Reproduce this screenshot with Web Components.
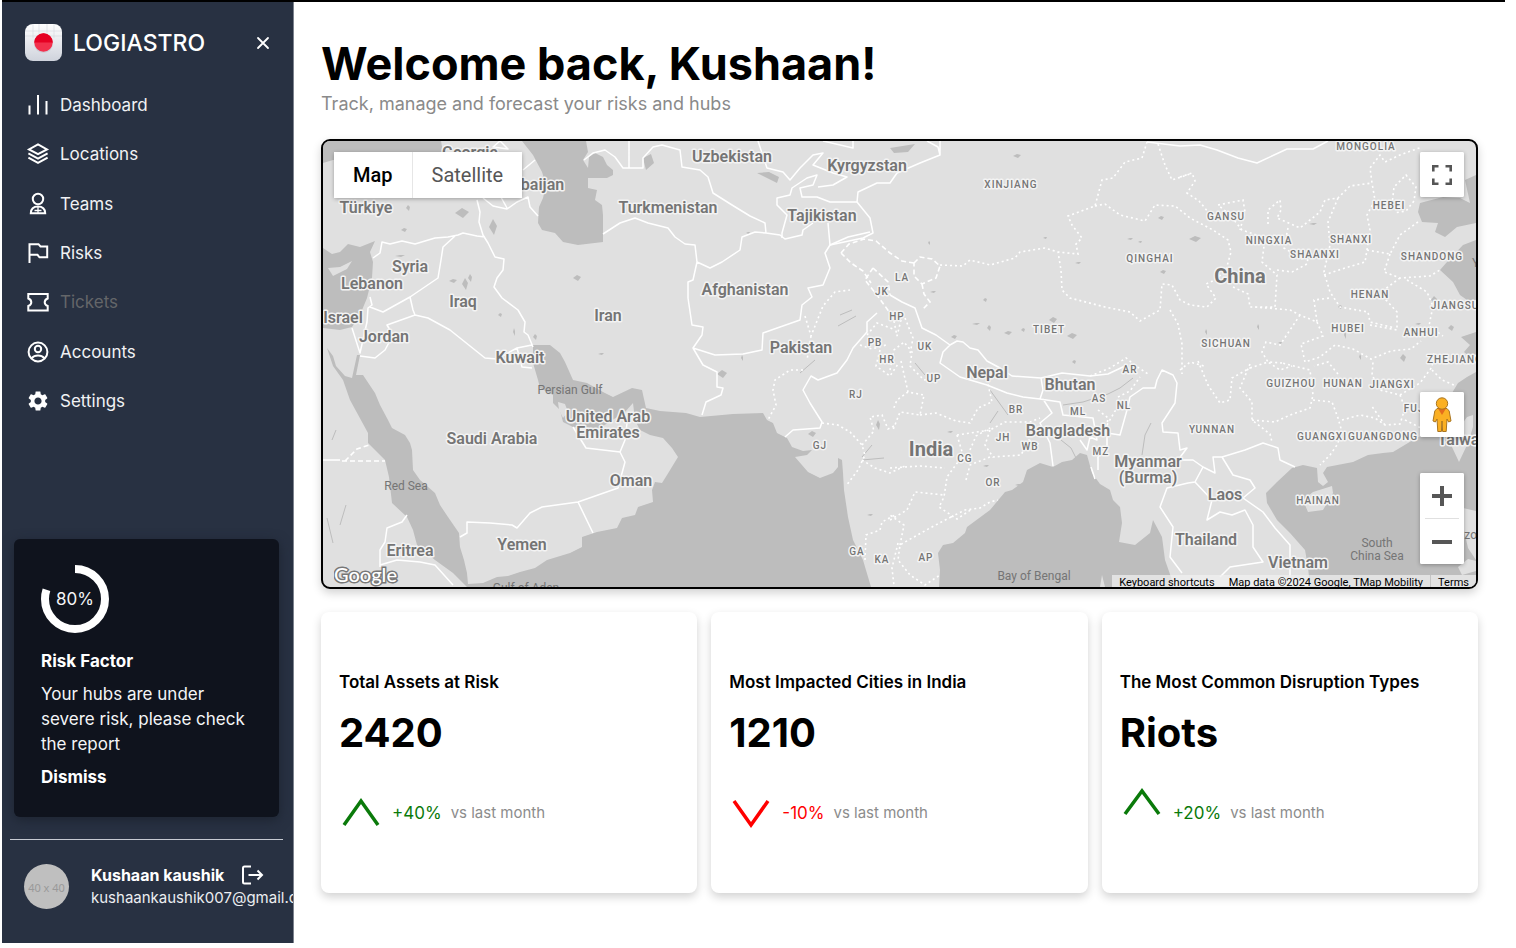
<!DOCTYPE html>
<html lang="en">
<head>
<meta charset="utf-8">
<meta name="viewport" content="width=device-width, initial-scale=1">
<title>Logiastro – Dashboard</title>
<style>
  body { margin: 0; background: #fff; color: #000; font-family: Inter, "Liberation Sans", sans-serif; }
</style>
</head>
<body>
<app-shell>
  <side-bar slot="side">
    <nav-item icon="chart">Dashboard</nav-item>
    <nav-item icon="layers">Locations</nav-item>
    <nav-item icon="team">Teams</nav-item>
    <nav-item icon="flag">Risks</nav-item>
    <nav-item icon="ticket" muted>Tickets</nav-item>
    <nav-item icon="account">Accounts</nav-item>
    <nav-item icon="gear">Settings</nav-item>
    <risk-card slot="card" value="80"></risk-card>
    <user-panel slot="user" name="Kushaan kaushik" email="kushaankaushik007@gmail.com"></user-panel>
  </side-bar>
  <page-heading>
    <span slot="title">Welcome back, Kushaan!</span>
    Track, manage and forecast your risks and hubs
  </page-heading>
  <region-map></region-map>
  <stat-row>
    <stat-card trend="up" change="+40%" value="2420">Total Assets at Risk</stat-card>
    <stat-card trend="down" change="-10%" value="1210">Most Impacted Cities in India</stat-card>
    <stat-card trend="rise" change="+20%" value="Riots">The Most Common Disruption Types</stat-card>
  </stat-row>
</app-shell>

<script>
function define(name, html, setup) {
  const template = document.createElement('template');
  template.innerHTML = html;
  customElements.define(name, class extends HTMLElement {
    constructor() {
      super();
      this.attachShadow({ mode: 'open' }).append(template.content.cloneNode(true));
    }
    connectedCallback() {
      if (setup) setup(this, this.shadowRoot);
    }
  });
}

define('app-shell', `
<style>
  :host { display: flex; box-sizing: border-box; min-height: calc(100vh - 5px); margin: 0 11px 5px 2px; border-top: 2px solid #000; }
  main { flex: 1; min-width: 0; padding: 37px 27px 48px; }
</style>
<slot name="side"></slot>
<main><slot></slot></main>`);

define('side-bar', `
<style>
  :host { display: flex; flex-direction: column; flex: none; box-sizing: border-box; width: 292px; overflow: hidden; background: #283142; border-right: 1px solid #7c828d; color: #fff; }
  header { display: flex; align-items: center; padding: 22px 22px 0 23px; }
  header svg { flex: none; }
  strong { flex: 1; margin-left: 11px; font-size: 23px; line-height: 36px; font-weight: 500; }
  button { display: flex; width: 16px; height: 16px; padding: 0; border: 0; background: none; color: inherit; }
  nav { display: grid; grid-auto-rows: 1fr; height: 346px; margin-top: 19px; }
  .card { margin: auto 14px 0 12px; }
  .user { margin: 22px 0 0 8px; }
</style>
<header>
  <svg width="37" height="37" viewBox="0 0 37 37" aria-hidden="true">
    <defs>
      <linearGradient id="tile" x1="0" y1="0" x2="0" y2="1"><stop offset="0" stop-color="#fff"/><stop offset="1" stop-color="#cfd3dc"/></linearGradient>
    </defs>
    <rect width="37" height="37" rx="8" fill="url(#tile)"/>
    <path d="M0 7h37M0 12h37M8 0v14M14 0v12M22 0v12M29 0v14" stroke="#d3d6dd" stroke-width=".6"/>
    <circle cx="18.5" cy="19.500" r="9.500" fill="#aab" opacity=".3"/>
    <circle cx="18.500" cy="18.500" r="9.200" fill="#f2304c"/>
    <path d="M9.300 18.500a9.200 9.200 0 0 1 18.400 0z" fill="#e60023"/>
  </svg>
  <strong>LOGIASTRO</strong>
  <button aria-label="Close menu"><svg width="16" height="16" viewBox="0 0 16 16"><path d="M3 3l10 10M13 3L3 13" stroke="currentColor" stroke-width="1.800" stroke-linecap="round"/></svg></button>
</header>
<nav aria-label="Main"><slot></slot></nav>
<div class="card"><slot name="card"></slot></div>
<div class="user"><slot name="user"></slot></div>`);

const ICONS = {
  chart: '<path d="M3.500 12.500v9M12 2v19.500M20.500 8v13.500"/>',
  layers: '<path d="M12 2.400l9 5-9 4.800-9-4.800zM2.400 11.400l9.600 5.200 9.600-5.200M2.400 15.600l9.600 5.300 9.600-5.300"/>',
  team: '<circle cx="12" cy="7" r="5.200"/><path d="M4.800 21.200c.2-4.800 3-6.600 7.200-6.600s7 1.800 7.200 6.600z"/><path stroke-width="1.300" d="M12 14.500v7M8.500 18.500h7"/>',
  flag: '<path d="M3.500 22V3.200h9l2 2.300h6.700v10.800h-7.700l-2-2.500h-8"/>',
  ticket: '<path d="M2.300 4h19.400v4.500c-4 1.500-4 6 0 7.500v4.500H2.300V16c4-1.500 4-6 0-7.500z"/>',
  account: '<circle cx="12" cy="12" r="9.400"/><circle cx="12" cy="9" r="3.200"/><path d="M5.500 18.200c3.300-3.600 9.700-3.600 13 0"/>',
  gear: '<path stroke="none" fill="currentColor" d="M19.140 12.940c.04-.3.06-.61.06-.94 0-.32-.02-.64-.07-.94l2.030-1.580c.18-.14.23-.41.12-.61l-1.920-3.320c-.12-.22-.37-.29-.59-.22l-2.390.96c-.5-.38-1.030-.7-1.620-.94l-.36-2.540c-.04-.24-.24-.41-.48-.41h-3.840c-.24 0-.43.17-.47.41l-.36 2.540c-.59.24-1.130.57-1.620.94l-2.390-.96c-.22-.08-.47 0-.59.22L2.740 8.870c-.12.21-.08.47.12.61l2.030 1.580c-.05.3-.09.63-.09.94s.02.64.07.94l-2.030 1.580c-.18.14-.23.41-.12.61l1.920 3.320c.12.22.37.29.59.22l2.390-.96c.5.38 1.030.7 1.620.94l.36 2.540c.05.24.24.41.48.41h3.840c.24 0 .44-.17.47-.41l.36-2.540c.59-.24 1.130-.56 1.620-.94l2.390.96c.22.08.47 0 .59-.22l1.920-3.320c.12-.22.07-.47-.12-.61zM12 15.600c-1.980 0-3.600-1.620-3.600-3.600s1.620-3.600 3.600-3.600 3.600 1.620 3.600 3.600-1.620 3.600-3.600 3.600z"/>'
};

define('nav-item', `
<style>
  :host { display: flex; }
  a { display: flex; flex: 1; align-items: center; gap: 10px; padding-left: 24px; color: #f1f2f4; font-size: 17px; line-height: 24px; text-decoration: none; }
  svg { flex: none; color: #fff; }
  :host([muted]) a { color: #646669; }
</style>
<a href="#"><svg width="24" height="24" viewBox="0 0 24 24" fill="none" stroke="currentColor" stroke-width="2" aria-hidden="true"></svg><span><slot></slot></span></a>`,
(el, root) => { root.querySelector('svg').innerHTML = ICONS[el.getAttribute('icon')]; });

define('risk-card', `
<style>
  :host { display: block; box-sizing: border-box; padding: 26px 27px 28px; border-radius: 6px; background: #0f131d; box-shadow: 0 3px 12px #1d2431; color: #f4f5f7; font-size: 17px; line-height: 24px; }
  .ring { display: grid; width: 68px; height: 68px; place-items: center; }
  .ring > * { grid-area: 1 / 1; }
  h2 { margin: 16px 0 9px; font-size: 17px; font-weight: 700; color: #fff; }
  p { margin: 0 0 8px; line-height: 25px; }
  button { display: block; padding: 0; border: 0; background: none; color: #fff; font: inherit; font-weight: 700; }
</style>
<div class="ring">
  <svg width="68" height="68" viewBox="0 0 68 68" fill="none" aria-hidden="true"><circle cx="34" cy="34" r="30" pathLength="100" stroke="#fff" stroke-width="8" transform="rotate(-90 34 34)"/></svg>
  <span></span>
</div>
<h2>Risk Factor</h2>
<p>Your hubs are under severe risk, please check the report</p>
<button>Dismiss</button>`,
(el, root) => {
  const value = el.getAttribute('value');
  root.querySelector('circle').setAttribute('stroke-dasharray', value + ' 100');
  root.querySelector('span').textContent = value + '%';
});

define('user-panel', `
<style>
  :host { display: flex; align-items: center; padding: 24px 0 34px 14px; white-space: nowrap; position: relative; }
  hr { position: absolute; top: 0; left: 0; width: 273px; height: 1px; margin: 0; border: 0; background: #c6cad2; }
  .avatar { flex: none; width: 45px; height: 45px; border-radius: 50%; background: #bfbfbf; color: #999; font-family: "Noto Sans", sans-serif; font-size: 11px; line-height: 47px; text-align: center; }
  .who { margin-left: 22px; }
  .top { display: flex; align-items: center; gap: 16px; height: 24px; }
  b { font-size: 16px; line-height: 24px; font-weight: 700; color: #fff; }
  .mail { font-size: 15px; line-height: 22px; color: #eceef1; }
  button { display: flex; padding: 0; border: 0; background: none; color: #fff; }
</style>
<hr>
<div class="avatar">40 x 40</div>
<div class="who">
  <div class="top"><b></b><button aria-label="Log out"><svg width="24" height="24" viewBox="0 0 24 24" fill="none" stroke="currentColor" stroke-width="2"><path d="M11 3.500H4.500a1.500 1.500 0 0 0-1.500 1.500v14a1.500 1.500 0 0 0 1.500 1.500H11M8.500 12h13M17.500 7.500L22 12l-4.500 4.500"/></svg></button></div>
  <div class="mail"></div>
</div>`,
(el, root) => {
  root.querySelector('b').textContent = el.getAttribute('name');
  root.querySelector('.mail').textContent = el.getAttribute('email');
});

define('page-heading', `
<style>
  :host { display: block; }
  h1 { margin: 0; font-size: 45px; line-height: 50px; font-weight: 700; }
  p { margin: 3px 0 23px; font-size: 18px; line-height: 24px; color: #8a8a8a; }
</style>
<h1><slot name="title"></slot></h1>
<p><slot></slot></p>`);

define('stat-row', `
<style>
  :host { display: grid; grid-template-columns: repeat(3, minmax(0, 1fr)); gap: 14px; margin-top: 23px; }
</style>
<slot></slot>`);

const ARROWS = {
  up: ['#0a7a0a', 'M5 32L22 8l17 24'],
  down: ['#f00', 'M5 8l17 24L39 8'],
  rise: ['#0a7a0a', 'M5 21L22 -2l17 23']
};

define('stat-card', `
<style>
  :host { display: flex; flex-direction: column; justify-content: center; box-sizing: border-box; min-height: 281px; padding: 18px 18px 20px; border-radius: 8px; background: #fff; box-shadow: 0 4px 10px #0000002e; }
  h2 { margin: 0; font-size: 17px; line-height: 24px; font-weight: 600; }
  strong { margin: 14px 0 35px; font-size: 40px; line-height: 50px; font-weight: 700; }
  .row { display: flex; align-items: center; height: 40px; }
  svg { flex: none; overflow: visible; }
  .change { margin: 0 9px; font-size: 17px; line-height: 24px; }
  .note { font-size: 15px; line-height: 24px; color: #8c8c8c; }
</style>
<h2><slot></slot></h2>
<strong></strong>
<div class="row"><svg width="44" height="40" viewBox="0 0 44 40" fill="none" stroke-width="3.500" aria-hidden="true"><path/></svg><span class="change"></span><span class="note">vs last month</span></div>`,
(el, root) => {
  const [color, d] = ARROWS[el.getAttribute('trend')];
  root.querySelector('strong').textContent = el.getAttribute('value');
  const change = root.querySelector('.change');
  change.textContent = el.getAttribute('change');
  change.style.color = color;
  const path = root.querySelector('path');
  path.setAttribute('d', d);
  path.setAttribute('stroke', color);
});

/* Map labels: [class, centre x, baseline y, text] */
const LABELS = [
  ['c', 470, 158, 'Georgia'], ['c', 526, 190, 'Azerbaijan'], ['c', 366, 213, 'Türkiye'], ['c', 410, 272, 'Syria'], ['c', 372, 289, 'Lebanon'],
  ['c', 463, 307, 'Iraq'], ['c', 343, 323, 'Israel'], ['c', 384, 342, 'Jordan'], ['c', 520, 363, 'Kuwait'], ['c', 608, 321, 'Iran'],
  ['c', 668, 213, 'Turkmenistan'], ['c', 732, 162, 'Uzbekistan'], ['c', 867, 171, 'Kyrgyzstan'], ['c', 822, 221, 'Tajikistan'],
  ['c', 745, 295, 'Afghanistan'], ['c', 801, 353, 'Pakistan'], ['c', 987, 378, 'Nepal'], ['c', 1070, 390, 'Bhutan'],
  ['c', 1068, 436, 'Bangladesh'], ['c', 1148, 467, 'Myanmar'], ['c', 1148, 483, '(Burma)'], ['c', 1225, 500, 'Laos'],
  ['c', 1206, 545, 'Thailand'], ['c', 1298, 568, 'Vietnam'], ['c', 1463, 445, 'Taiwan'], ['c', 492, 444, 'Saudi Arabia'],
  ['c', 608, 422, 'United Arab'], ['c', 608, 438, 'Emirates'], ['c', 631, 486, 'Oman'], ['c', 522, 550, 'Yemen'], ['c', 410, 556, 'Eritrea'],
  ['b', 1240, 283, 'China'], ['b', 931, 456, 'India'],
  ['p', 1011, 188, 'XINJIANG'], ['p', 1366, 150, 'MONGOLIA'], ['p', 1226, 220, 'GANSU'], ['p', 1389, 209, 'HEBEI'], ['p', 1269, 244, 'NINGXIA'],
  ['p', 1351, 243, 'SHANXI'], ['p', 1315, 258, 'SHAANXI'], ['p', 1432, 260, 'SHANDONG'], ['p', 1150, 262, 'QINGHAI'], ['p', 1370, 298, 'HENAN'],
  ['p', 1455, 309, 'JIANGSU'], ['p', 1049, 333, 'TIBET'], ['p', 1348, 332, 'HUBEI'], ['p', 1421, 336, 'ANHUI'], ['p', 1226, 347, 'SICHUAN'],
  ['p', 1455, 363, 'ZHEJIANG'], ['p', 1291, 387, 'GUIZHOU'], ['p', 1343, 387, 'HUNAN'], ['p', 1392, 388, 'JIANGXI'], ['p', 1424, 412, 'FUJIAN'],
  ['p', 1212, 433, 'YUNNAN'], ['p', 1322, 440, 'GUANGXI'], ['p', 1383, 440, 'GUANGDONG'], ['p', 1318, 504, 'HAINAN'],
  ['p', 902, 281, 'LA'], ['p', 882, 295, 'JK'], ['p', 897, 320, 'HP'], ['p', 875, 346, 'PB'], ['p', 925, 350, 'UK'], ['p', 887, 363, 'HR'],
  ['p', 934, 382, 'UP'], ['p', 856, 398, 'RJ'], ['p', 1016, 413, 'BR'], ['p', 1078, 415, 'ML'], ['p', 1099, 402, 'AS'], ['p', 1130, 373, 'AR'],
  ['p', 1124, 409, 'NL'], ['p', 1003, 441, 'JH'], ['p', 1030, 450, 'WB'], ['p', 1101, 455, 'MZ'], ['p', 965, 462, 'CG'], ['p', 993, 486, 'OR'],
  ['p', 820, 449, 'GJ'], ['p', 857, 555, 'GA'], ['p', 882, 563, 'KA'], ['p', 926, 561, 'AP'],
  ['w', 570, 394, 'Persian Gulf'], ['w', 406, 490, 'Red Sea'], ['w', 526, 592, 'Gulf of Aden'], ['w', 1034, 580, 'Bay of Bengal'],
  ['w', 1377, 547, 'South'], ['w', 1377, 560, 'China Sea'], ['w', 1480, 267, 'Yel'], ['w', 1474, 539, 'zon']
];

/* Small lakes: [x, y, half width, half height] */
const LAKES = [[1017,156,4,2],[1195,239,6,3],[1161,218,3,2],[1163,272,3,2],[1053,320,4,3],[1072,336,5,3],[1008,333,4,2],[976,324,4,1],[989,328,2,3],[954,337,3,2],[1023,330,2,2],[1078,263,3,1],[1130,239,3,1],[1140,242,2,1],[1045,238,2,1],[929,243,1,2],[465,284,3,6],[453,281,4,2],[470,278,2,4],[493,227,4,8],[462,213,7,5],[577,278,4,3],[400,256,5,1],[514,332,1,4],[535,337,2,3],[408,208,2,3],[404,230,3,2],[500,315,2,2],[722,374,5,4],[748,233,2,1],[742,358,1,3],[812,434,4,3],[601,354,3,1],[878,425,2,5],[870,515,3,1],[986,466,3,1],[950,432,3,1],[1018,485,3,1],[1451,328,3,3],[1418,324,3,1],[1403,358,3,4],[1340,307,2,2],[1434,300,3,4],[1382,132,2,1],[1313,224,4,1],[1360,357,1,3],[1345,335,1,4],[1280,343,2,1],[1258,327,1,3],[1206,332,1,3],[1074,362,2,2],[985,300,2,2],[933,292,3,1]];

define('region-map', `
<style>
  :host { display: block; position: relative; height: 446px; overflow: hidden; border: 2px solid #000; border-radius: 9px; background: #e0e0e0; box-shadow: 0 4px 10px #0000002e; font-family: Roboto, "Liberation Sans", sans-serif; }
  .canvas { display: block; width: 100%; height: 446px; }
  text { fill: #757575; text-anchor: middle; }
  .c, .b, .p { stroke: #f3f3f3; stroke-width: 3px; stroke-linejoin: round; paint-order: stroke; }
  .c { font-size: 16px; font-weight: 600; }
  .b { font-size: 20px; font-weight: 700; }
  .p { font-size: 10px; font-weight: 500; letter-spacing: 1px; }
  .w { font-size: 12px; }
  button { padding: 0; border: 0; background: #fff; color: #565656; font-family: inherit; }
  .types, .tools, .legal, .brand { position: absolute; }
  .types { top: 11px; left: 11px; display: flex; border-radius: 2px; background: #fff; box-shadow: 0 1px 4px #0000004d; }
  .types button { padding: 0 19px; font-size: 20px; line-height: 46px; }
  .types .on { color: #000; font-weight: 500; border-right: 1px solid #e6e6e6; }
  .tools { right: 12px; display: flex; flex-direction: column; width: 44px; border-radius: 2px; overflow: hidden; box-shadow: 0 1px 4px #0000004d; background: #fff; }
  .tools button { display: grid; place-items: center; width: 44px; height: 45px; }
  .full { top: 11px; }
  .peg { bottom: 150px; }
  .zoom { bottom: 23px; }
  .zoom hr { width: 34px; height: 1px; margin: 0 auto; border: 0; background: #e0e0e0; }
  .brand { left: 11px; bottom: 0; width: 70px; height: 26px; }
  .brand text { fill: #fff; stroke: #777; stroke-width: 3px; paint-order: stroke; text-anchor: start; font: 500 20px Lato, sans-serif; }
  .legal { right: 0; bottom: -4px; display: flex; height: 16px; background: #f0f0f0b8; }
  .legal > * { padding: 0 7px; background: none; font-size: 11px; line-height: 16px; color: #000; text-decoration: none; }
  .legal a { border-left: 1px solid #c4c4c4; }
</style>
<svg class="canvas" viewBox="323 141 1153 446" preserveAspectRatio="xMidYMid slice" role="img" aria-label="Map of West, South and East Asia">
  <g fill="#bdbdbd">
    <path d="M323 141H441L443 152 425 158 400 153 380 157 333 160 323 163z"/>
    <path d="M522 141L533 155 542 172 546 185 543 198 539 207 538 223 542 230 555 233 563 242 578 245 603 242 603 215 602 205 595 200 597 190 588 188 588 178 597 178 607 178 613 175 613 170 607 165 603 157 595 153 589 157 588 168 583 160 588 152 586 141z"/>
    <path d="M323 248L332 254 340 252 348 244 360 247 375 241 370 252 373 262 372 278 367 298 360 315 352 327 340 330 323 328z"/>
    <path d="M327 348L333 356 336 366 345 376 352 378 357 355 360 355 356 375 363 375 375 393 380 405 388 420 392 428 405 435 410 443 412 450 413 470 420 480 435 493 440 505 448 517 459 533 460 547 464 560 467 573 468 584 483 583 497 577 508 576 520 572 535 568 547 560 570 553 582 547 582 537 597 532 617 528 622 518 635 515 638 507 653 502 652 490 655 482 662 483 667 475 678 457 672 448 663 438 650 435 640 430 635 420 633 403 625 412 600 428 573 427 563 422 560 410 553 403 553 395 540 388 538 380 533 363 533 345 550 345 560 353 565 362 573 380 587 383 603 392 613 397 632 388 642 390 646 408 660 411 673 412 686 413 700 417 733 414 763 413 767 420 773 423 777 433 787 438 792 447 803 451 812 450 807 455 795 457 808 472 820 478 833 473 838 467 838 458 842 460 843 473 844 490 848 517 853 540 863 560 871 587H467L453 573 435 560 417 545 413 530 407 517 392 503 389 477 385 460 368 443 368 433 350 400 343 380 333 366z"/>
    <path d="M939 587L940 570 938 553 943 545 953 543 965 533 967 527 990 510 1005 492 1012 490 1023 482 1027 470 1040 463 1053 467 1062 462 1072 460 1080 453 1087 455 1092 473 1100 484 1110 490 1113 500 1120 507 1122 523 1119 542 1135 545 1150 533 1153 520 1162 537 1165 560 1172 580 1173 587z"/>
    <path d="M1476 372L1467 377 1458 383 1452 393 1445 408 1432 430 1413 440 1393 452 1383 453 1368 455 1353 462 1327 467 1323 473 1328 482 1323 486 1318 482 1317 468 1303 465 1292 468 1277 482 1266 493 1267 503 1277 520 1290 533 1305 550 1308 567 1310 587H1476z"/>
    <path d="M1420 203L1443 197 1460 198 1470 203 1465 180 1476 175V223L1457 227 1445 237 1435 232 1438 223 1422 222 1418 212z"/>
    <path d="M1476 240L1463 245 1447 262 1440 270 1453 282 1460 295 1467 300 1476 306zM1476 332L1461 337 1470 345 1464 352 1476 362z"/>
    <path d="M643 158l8-4 3 9-8 7zM757 173l12-1 10 5-2 6zM890 148l25-4-7 8-14 1z"/>
  </g>
  <g fill="#e0e0e0">
    <path d="M328 268L340 267 352 261 347 269 333 276zM558 402l7 2 3 8-5 6-4-8z"/>
    <path d="M1303 500L1313 492 1332 486 1333 493 1323 510 1308 512zM1467 417L1473 415 1473 427 1468 443 1459 462 1452 447 1458 430zM1463 508L1476 511V560L1468 548 1464 530zM1458 567l10-8 8 2v10l-14 4zM1100 587l2-12 3 12z"/>
  </g>
  <g class="lakes" fill="#bdbdbd"></g>
  <path fill="none" stroke="#bdbdbd" d="M1063 405L1083 402 1108 394 1120 388 1133 378M915 363l10 12M990 390l18 25M990 423l8-12M1061 440l10 8 6 12M862 457l10-12M862 460l22-2M840 315l12-5M838 326l18-10M332 440l4-10M340 525l6-20M1142 455l3-20 6-12M800 373l15-13M333 543l-6-25"/>
  <g fill="none" stroke="#fff" stroke-width="1.500" stroke-linejoin="round">
    <path d="M373 258L380 253 382 242 390 244 402 241 415 244 435 238 448 237 458 235 463 233 477 236 485 237M477 200L480 212 479 222 483 235 488 243 495 257 504 259 503 270 497 278 494 287 502 298 518 310 525 322 524 332 528 335 533 347M455 236L443 247 441 260 438 278 410 297 383 312 370 307M410 297L413 310 415 315 387 325 393 335 385 350 375 358 360 356M415 315L428 318 450 330 485 358 497 359 517 348 532 345M517 348L522 367 532 368M370 297L372 305 368 308 367 322 360 353 352 328M483 198L493 206 507 209 517 202 528 197 530 207 538 216M535 160L523 170M497 190l10 18M500 141l8 8-15-2z"/>
    <path d="M584 160L593 153 605 150 615 157 623 168 643 168 643 158 653 147 662 145 680 150 682 167 700 170 708 177 713 193 732 205 750 216 765 223 766 233M629 141V168M603 234L620 223 635 218 648 223 668 228 675 237 685 244 695 245 697 262 710 268 722 262 740 250 742 237 755 232 766 233 780 235 785 239 802 235 803 230 813 223M697 262L693 280 688 282 688 298 692 325 703 327 702 335 693 348 715 355 743 354 762 350 763 333 780 327 800 320 802 305 812 297 808 288 823 285 830 268 825 253 830 245 863 238 873 233 870 218 857 202M693 348L703 365 717 372 717 387 723 388 721 395 706 402 702 415"/>
    <path d="M782 238L782 233 787 215 777 205 777 198 790 195 792 188 807 178 817 175 813 185 800 188 802 197 817 197 830 202 857 202M758 141L767 168 783 172 790 180 800 168 813 155 823 153 813 165 833 173 847 177 833 185 818 187M857 202L858 192 877 183 890 183 897 173 920 163 940 155 938 147 927 141M940 155V141M823 141L853 148 853 141M828 223L830 245 848 237 870 232"/>
    <path d="M877 313L867 322 867 332 853 348 847 360 837 373 818 380 811 376 803 390 810 403 822 422 820 428 793 430 785 437M890 295L902 302 915 308 922 328 936 335 950 345 957 341 963 342 970 348 978 350 987 361 1000 368 1012 376 1041 378 1043 390 1040 399 1023 397 1007 393 987 385 960 377 940 363 943 352 950 345M1041 378L1062 373 1090 376 1108 374 1125 366M1040 399L1060 402 1063 415 1093 418 1097 440 1090 437 1087 450 1080 440M1043 399L1052 413 1040 423 1050 443 1053 466M1098 470L1098 457 1107 447 1107 433 1120 435 1127 410 1130 397 1143 388 1155 388 1157 380 1162 370 1173 375 1177 383 1175 403 1162 423 1163 432 1178 433 1180 450 1187 448 1178 460 1193 460 1203 467 1195 482 1188 483 1167 488 1160 507 1173 527 1170 557 1182 573M1091 467l4 12"/>
    <path d="M1203 467L1215 473 1213 457 1222 457 1245 450 1263 443 1278 448 1280 460 1295 467M1222 457L1233 475 1250 480 1255 488 1243 498 1263 512 1275 528 1290 545 1290 577M1195 482L1212 500 1207 520 1220 512 1232 515 1245 510 1253 525 1253 547 1263 562 1230 567 1220 577M1147 142L1180 146 1200 145 1217 150 1238 158 1257 163 1287 149 1313 149 1328 141"/>
    <path d="M407 515L402 522 387 528 385 542 380 550 380 567M380 565L397 560 420 562 435 565 453 585M323 460H340M460 537L467 533 467 522 490 523 512 525 517 528 530 513 542 507 578 502 618 488 625 462 620 452 586 448 573 427M620 452L625 440 627 423M578 502L593 533"/>
  </g>
  <g fill="none" stroke="#fff" stroke-width="1.600" stroke-dasharray="2 3">
    <path stroke-dasharray="5 3" d="M342 461H385M345 461l12-12 12-4M841 253l8-9 15-5 12 2 14 12 12 8 12 2M841 253l10 10 12 8 8 12M873 268l15 14 2 13M873 268l-8 12 12 15 13 18M914 263l6-6 12 2 8 7-4 12-14 6-8-8zM922 284l2 10 6 8-8 8"/>
    <path d="M940 265L963 266 970 260 990 265 1015 258 1020 252 1045 248 1058 252 1078 254 1076 244 1082 238 1072 225 1068 216 1095 206 1102 180 1113 178 1125 162 1142 158 1147 142M1158 144L1165 165 1172 180 1190 174M1095 206L1105 204 1120 215 1145 221 1155 205 1175 206 1190 218 1213 230 1228 240 1231 252 1226 270 1215 280 1206 284 1216 298 1207 307 1190 305 1180 300 1172 285 1162 284 1160 310 1140 321 1130 312 1105 307 1070 298 1062 290 1061 270 1058 252"/>
    <path d="M1233 287L1248 294 1250 307 1275 307 1277 275 1262 262 1265 238 1242 230 1230 215 1218 205 1243 200 1245 212 1240 230M1180 177l12-4 3 8-8 12 12 8 10 12 14 6M1268 224L1268 210 1280 200 1281 210 1277 218 1300 228 1320 212 1325 200 1338 198 1350 186 1372 183 1370 168 1380 155 1385 162 1400 155 1422 147M1288 228l-4 20 20 12M1338 198L1328 222 1330 245 1324 272 1330 292 1340 307 1368 312 1370 322 1395 328M1277 270l15 2 15-8 2-12M1324 275L1345 268 1365 262 1367 250 1370 230 1367 215 1375 200 1372 183M1367 250L1390 254 1400 235 1418 222M1392 205l2-18 12-12 10 12-2 14-8 10-12 2M1390 254L1384 272 1400 278 1430 276 1440 270M1400 278L1384 290 1386 300 1397 312 1397 330 1370 325M1407 280l20 12 6 14-4 20 14 10M1255 307L1290 310 1300 315 1317 322 1314 300 1330 298M1300 315L1290 330 1280 345 1266 342 1262 352 1268 362 1282 363M1317 322l6 14-22 8 4 18 15-5 15-12 18 4 18 10 20-8 20-2 10-8"/>
    <path d="M1198 361L1208 385 1220 403 1230 400 1232 378 1250 368M1170 310l8 14 4 20v30M1250 364L1240 388 1252 402 1252 420 1270 434 1272 442M1252 420L1275 422 1290 415 1310 408 1313 395 1310 370 1282 363M1313 400L1332 402 1338 418 1342 432 1337 445 1330 455 1320 465M1342 420L1360 415 1375 418 1385 425 1400 424 1405 408 1400 395 1380 390 1372 375 1373 362M1385 425l-14-20M1400 395l20-12 12-16 2-15M1432 370l10 10 14 6M1405 420l20 10M1338 374l-10-12-14 4M1250 368l18-6 12 8 12-4"/>
    <path d="M803 370L790 370 775 380 773 390 776 405 768 420M805 316l6 20 12-30 12-14 15-2M811 336l-4 24M822 423L838 425 850 432 862 445 865 455 858 470 846 486M862 460L875 468 890 473 905 466M862 445l12-14-4-14 12-2 6 14 8-4M890 370l4-20 10-8 8 10-2 14 14 14 16-2M860 345l12 4 14-4M880 350l-4 16 14 10 8-12M867 335l10-12 16 6M893 316l4 20 5-20M905 318l8 20-3 16M901 361L908 392 924 395 920 415 900 412 893 430M908 392L897 400 893 410M920 415l16-2 20 8 14 2 8-15 14-6-4-18M957 435L990 430 1005 422 1030 422 1040 418M990 430l-5 15 8 12 28-2 8-15 10 4M957 435l6 20-16 22-3 20-5 10 18 12 15-10M890 468L920 466 945 468M966 480l4-15 20-8M951 517L965 510 980 508 990 502 998 500M951 517L930 528 905 542 900 545 898 560 910 575 925 585 940 575M890 520L907 510 915 492 944 495M865 560L866 535 880 530 882 522 895 515M900 545l4-20-14-10M898 543l-6 25 2 18"/>
    <path d="M1098 410l10 8-2 14M1107 425l8-14 12-6M1090 376l20-8 16-10 10 8 12 8M1118 397l12-6 10-14M970 450l6-14 14-8M1180 370l10-8 14 4"/>
  </g>
  <g class="labels"></g>
</svg>
<svg class="brand" viewBox="0 0 70 26"><text x="0" y="21">Google</text></svg>
<div class="legal"><button>Keyboard shortcuts</button><span>Map data ©2024 Google, TMap Mobility</span><a href="#">Terms</a></div>
<div class="types"><button class="on">Map</button><button>Satellite</button></div>
<div class="tools full"><button aria-label="Toggle fullscreen"><svg width="22" height="22" viewBox="0 0 22 22" fill="none" stroke="currentColor" stroke-width="2.600"><path d="M2.300 7.500V2.300h5.200M14.500 2.300h5.200v5.200M19.700 14.500v5.200h-5.200M7.500 19.700H2.300v-5.200"/></svg></button></div>
<div class="tools peg"><button aria-label="Street View"><svg width="20" height="36" viewBox="0 0 20 36" stroke="#a97520" stroke-width="1" stroke-linejoin="round"><path fill="#fbb023" d="M5 11.500h10l2.200 2.500L19 24l-2.400 1-1.600-3-.8 12.500h-3.600L10 24l-.6 10.500H5.800L5 22l-1.600 3L1 24l1.800-10z"/><path fill="#e56c1c" stroke="none" d="M6 11.500h8L10 18z"/><circle cx="10" cy="6.500" r="5.700" fill="#fbb023"/></svg></button></div>
<div class="tools zoom"><button aria-label="Zoom in"><svg width="22" height="22" viewBox="0 0 22 22" stroke="currentColor" stroke-width="4"><path d="M1 11h20M11 1v20"/></svg></button><hr><button aria-label="Zoom out"><svg width="22" height="22" viewBox="0 0 22 22" stroke="currentColor" stroke-width="4"><path d="M1 11h20"/></svg></button></div>`,
(el, root) => {
  root.querySelector('.labels').innerHTML = LABELS.map(([kind, x, y, text]) => `<text class="${kind}" x="${x}" y="${y}">${text}</text>`).join('');
  root.querySelector('.lakes').innerHTML = LAKES.map(([x, y, w, h]) => `<path d="M${x - w} ${y}L${x} ${y - h} ${x + w} ${y - 1} ${x + 1} ${y + h}z"/>`).join('');
});
</script>
</body>
</html>
